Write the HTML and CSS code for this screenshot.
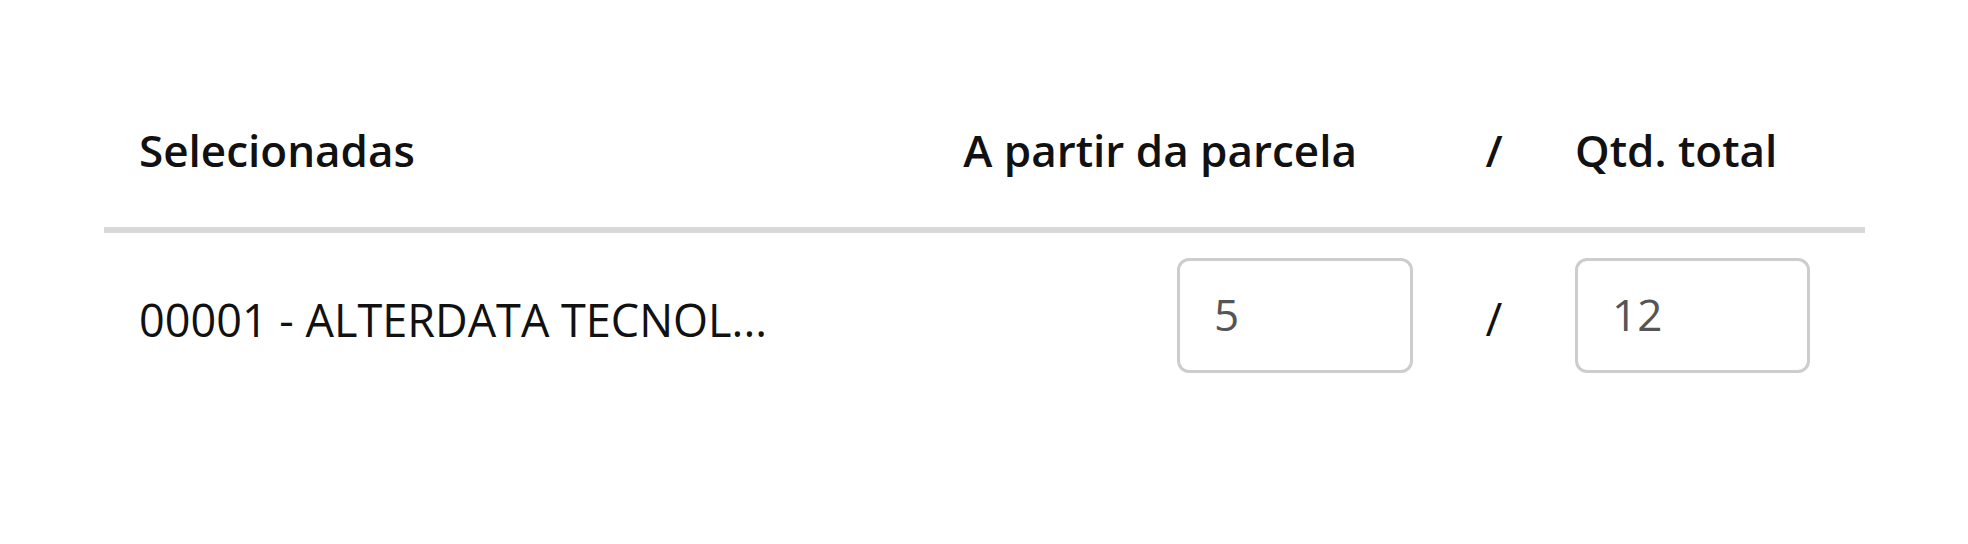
FILE: index.html
```html
<!DOCTYPE html>
<html lang="pt-BR">
<head>
<meta charset="utf-8">
<title>Parcelas selecionadas</title>
<link rel="stylesheet" href="styles.css">
</head>
<body>
  <section class="panel">
    <div class="grid head">
      <div class="cell name">Selecionadas</div>
      <div class="cell from">A partir da parcela</div>
      <div class="cell sep">/</div>
      <div class="cell total">Qtd. total</div>
    </div>
    <div class="grid row">
      <div class="cell name">00001 - ALTERDATA TECNOL...</div>
      <div class="cell from"><input class="field" type="text" value="5"></div>
      <div class="cell sep">/</div>
      <div class="cell total"><input class="field" type="text" value="12"></div>
    </div>
  </section>
</body>
</html>
```

FILE: styles.css
```css
html, body {
  margin: 0;
  background: #ffffff;
}

body {
  font-family: "Open Sans", "Noto Sans", sans-serif;
  color: #111111;
}

.panel {
  margin-left: 104px;
  width: 1761px;
}

.grid {
  display: grid;
  grid-template-columns: 1073px 236px 162px 235px 55px;
}

.cell {
  font-size: 44px;
  line-height: 60px;
  white-space: nowrap;
}

/* header row */
.head {
  padding-top: 120px;
  padding-bottom: 47px;
  border-bottom: 6px solid #d9d9d9;
}

.head .cell {
  font-weight: 600;
}

.head .from {
  display: flex;
  justify-content: flex-end;
  padding-right: 56px;
}

.name {
  padding-left: 35px;
}

.sep {
  text-align: center;
}

/* data row */
.row {
  padding-top: 25px;
  align-items: start;
}

.row .name {
  padding-top: 32px;
  font-size: 45px;
}

.row .sep {
  padding-top: 30px;
  font-size: 46px;
}

.field {
  box-sizing: border-box;
  width: 100%;
  height: 115px;
  margin: 0;
  padding: 0 0 4px 34px;
  border: 3px solid #cdcdcd;
  border-radius: 12px;
  background: #ffffff;
  font-family: "Open Sans", "Noto Sans", sans-serif;
  font-size: 44px;
  color: #555555;
  outline: none;
}
```
